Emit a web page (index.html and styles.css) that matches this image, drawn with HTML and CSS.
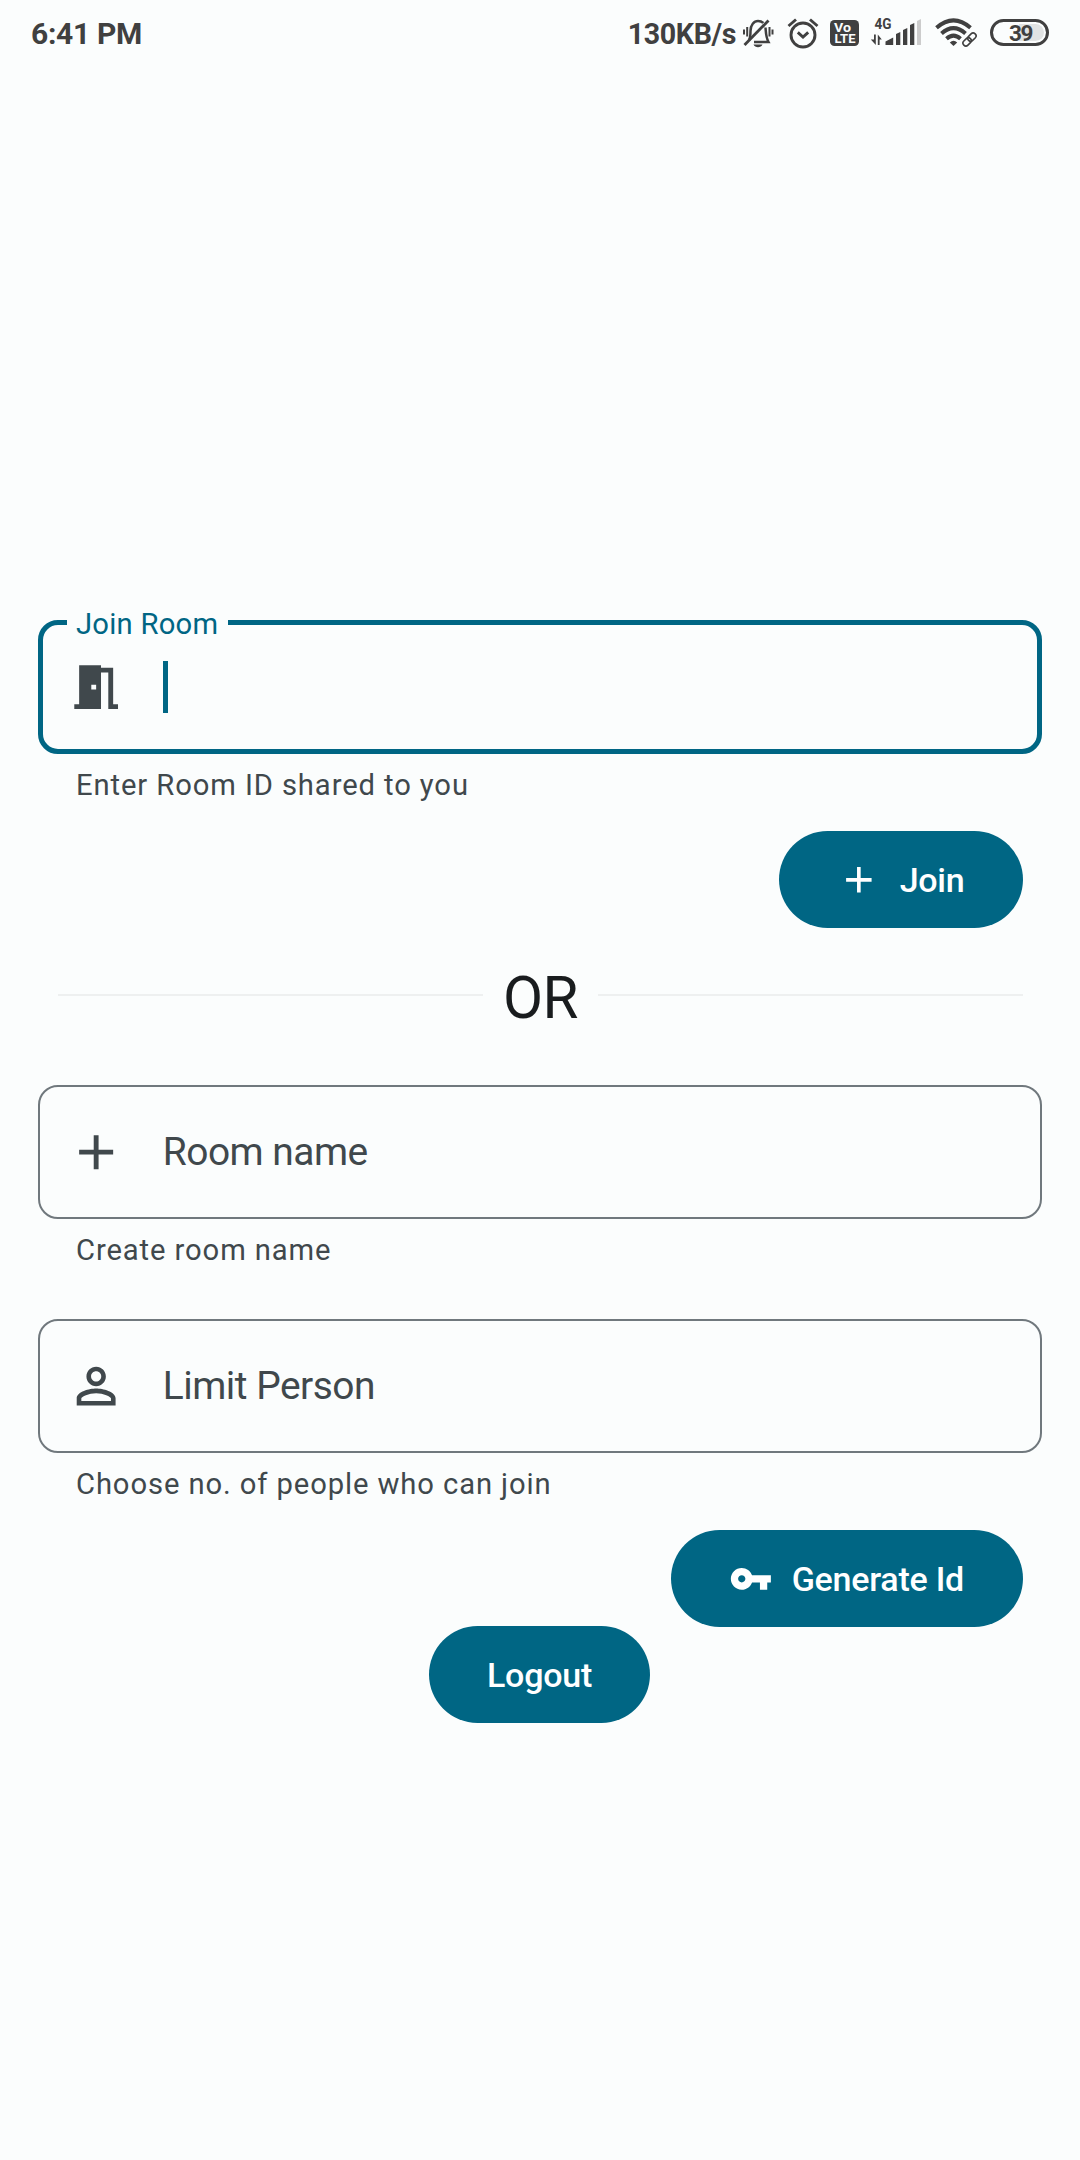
FILE: index.html
```html
<!DOCTYPE html>
<html lang="en">
<head>
<meta charset="utf-8">
<title>Join Room</title>
<link rel="stylesheet" href="styles.css">
</head>
<body>
<header class="status">
  <span class="clock">6:41 PM</span>
  <div class="tray">
    <span class="speed">130KB/s</span>
    <svg class="bell" width="32" height="30" viewBox="0 0 32 30" fill="none" stroke="#404040" stroke-width="2.500">
      <path d="M7 22c1.500-2.500 1.500-5 1.500-9 0-6 3.500-10 7.500-10 2 0 4 .6 5.300 2M23.500 9.500c.5 5.500.3 9.500 3 14.500H12"/>
      <path d="M2.500 27 26.500 2.500" stroke-width="2.800"/>
      <path d="M11.500 26.500h9c-1.500 3.700-7.500 3.700-9 0z" fill="#404040" stroke="none"/>
      <path d="M5.200 9v9.500M2 11.500v5M27.500 9v9.500M30.500 11.500v5" stroke-width="2"/>
    </svg>
    <svg class="alarm" width="32" height="32" viewBox="0 0 32 32" fill="none" stroke="#404040" stroke-width="2.900">
      <circle cx="16" cy="18" r="12"/><path d="m10.800 15.300 5.200 4.700 5.200-4.700M1.500 9 9 2.500M30.500 9 23 2.500"/>
    </svg>
    <svg class="volte" width="30" height="26" viewBox="0 0 30 26">
      <rect width="29" height="26" rx="4.500" fill="#404040"/>
      <text x="4" y="11.500" textLength="17" lengthAdjust="spacingAndGlyphs">Vo</text>
      <text x="4.500" y="23" textLength="21" lengthAdjust="spacingAndGlyphs">LTE</text>
    </svg>
    <svg class="signal" width="52" height="30" viewBox="0 0 52 30" fill="#404040">
      <text x="4.500" y="11.200" textLength="17" lengthAdjust="spacingAndGlyphs">4G</text>
      <path d="M4 16.500h1.800V27L.8 21.500H4zM7.800 27V16.500l4 5H9.600V27z"/>
      <path d="M15.500 27v-3.500l7.700-4V27zM26 27V16l4.300-2v13zM33 27V12l4.300-2v17zM40 27V7l4.300-2v22z"/>
      <path d="M47 27V3l4-2v26z" fill="#ccc"/>
    </svg>
    <svg class="wifi" width="42" height="30" viewBox="0 0 42 30" fill="none" stroke="#404040">
      <path d="M1.500 9.800Q18.500-5 35.500 9.800M6.500 15.500Q18.500 4.800 30.500 15.500M11.500 20.800Q18.500 14.500 25.500 20.800" stroke-width="4"/>
      <path d="m18.500 28-3.700-3.500q3.700-3.500 7.400 0z" fill="#404040" stroke="none"/>
      <g transform="rotate(-45 34.500 21.500)" stroke="#fbfdfd" stroke-width="4"><rect x="26.500" y="18.600" width="9.300" height="5.800" rx="2.900"/><rect x="33.200" y="18.600" width="9.300" height="5.800" rx="2.900"/></g>
      <g transform="rotate(-45 34.500 21.500)" stroke-width="1.600"><rect x="26.500" y="18.600" width="9.300" height="5.800" rx="2.900"/><rect x="33.200" y="18.600" width="9.300" height="5.800" rx="2.900"/></g>
    </svg>
    <div class="battery"><span class="charge">39</span></div>
  </div>
</header>

<main class="rooms">
  <div class="field focused">
    <span class="label">Join Room</span>
    <svg class="lead" viewBox="0 0 24 24"><path d="M14 6v15H3v-2h2V3h9v1h5v15h2v2h-4V6h-3zm-4 5v2h2v-2h-2z"/></svg>
    <span class="caret"></span>
  </div>
  <p class="helper">Enter Room ID shared to you</p>
  <button class="btn end join">
    <svg viewBox="0 0 24 24"><path d="M19 13h-6v6h-2v-6H5v-2h6V5h2v6h6v2z"/></svg>
    <span>Join</span>
  </button>

  <div class="or"><i></i><span>OR</span><i></i></div>

  <div class="field">
    <svg class="lead" viewBox="0 0 24 24"><path d="M19 13h-6v6h-2v-6H5v-2h6V5h2v6h6v2z"/></svg>
    <span class="hint">Room name</span>
  </div>
  <p class="helper">Create room name</p>

  <div class="field limit">
    <svg class="lead" viewBox="0 0 24 24"><path d="M12 5.900c1.160 0 2.100.94 2.100 2.100s-.94 2.100-2.100 2.100S9.900 9.160 9.900 8s.94-2.100 2.100-2.100m0 9c2.970 0 6.100 1.460 6.100 2.100v1.100H5.900V17c0-.64 3.130-2.100 6.100-2.100M12 4C9.790 4 8 5.790 8 8s1.790 4 4 4 4-1.790 4-4-1.790-4-4-4zm0 9c-2.670 0-8 1.340-8 4v3h16v-3c0-2.660-5.330-4-8-4z"/></svg>
    <span class="hint">Limit Person</span>
  </div>
  <p class="helper">Choose no. of people who can join</p>
  <button class="btn end generate">
    <svg viewBox="0 0 24 24"><path d="M12.650 10C11.830 7.670 9.610 6 7 6c-3.310 0-6 2.690-6 6s2.690 6 6 6c2.610 0 4.830-1.670 5.650-4H17v4h4v-4h2v-4H12.650zM7 14c-1.100 0-2-.9-2-2s.9-2 2-2 2 .9 2 2-.9 2-2 2z"/></svg>
    <span>Generate Id</span>
  </button>
  <button class="btn logout"><span>Logout</span></button>
</main>
</body>
</html>
```

FILE: styles.css
```css
* { box-sizing: border-box; }

body {
  margin: 0;
  min-height: 2160px;
  background: #fbfdfd;
  color: #40484c;
  font-family: Roboto, "Liberation Sans", sans-serif;
}

.status {
  display: flex;
  justify-content: space-between;
  height: 66px;
  padding: 0 31px;
  color: #404040;
  font-weight: 700;
}

.clock { font-size: 30px; line-height: 67px; letter-spacing: -0.3px; }

.tray { display: flex; align-items: flex-start; }
.speed { margin-right: 6px; font-size: 28.6px; line-height: 69px; letter-spacing: -0.4px; }
.bell { margin: 18px 13px 0 0; }
.alarm { margin: 17px 11px 0 0; }
.volte { margin: 20px 10px 0 0; }
.volte text { fill: #fbfdfd; font-size: 12.5px; font-weight: 700; }
.signal { margin: 18px 13px 0 0; }
.signal text { font-size: 14.5px; font-weight: 700; }
.wifi { margin: 18px 13px 0 0; }

.battery {
  width: 59px;
  height: 27px;
  margin-top: 19px;
  padding: 2px;
  border: 3px solid #404040;
  border-radius: 14px;
}

.charge {
  display: block;
  height: 17px;
  padding-left: 14px;
  border-radius: 9px;
  background: linear-gradient(90deg, #fbfdfd 50%, #e1e3e3 50%);
  font-size: 22.5px;
  line-height: 19px;
  letter-spacing: -1.5px;
}

.rooms {
  display: flex;
  flex-direction: column;
  padding: 554px 38px 0;
}

.field {
  position: relative;
  display: flex;
  align-items: center;
  height: 134px;
  padding-left: 27px;
  border: 2px solid #70787d;
  border-radius: 20px;
}

.field.focused { padding-left: 24px; border: 5px solid #006684; }
.field.limit { margin-top: 49px; }

.label {
  position: absolute;
  left: 24px;
  top: -21px;
  padding: 0 9px;
  width: 161px;
  background: #fbfdfd;
  color: #006684;
  font-size: 29.200px;
  line-height: 40px;
  letter-spacing: 0.250px;
  white-space: nowrap;
}

.lead { width: 58.300px; height: 58.300px; fill: #40484c; }
.caret { width: 5px; height: 52px; margin-left: 38px; background: #006684; }
.hint { margin-left: 37.500px; font-size: 38.900px; line-height: 52px; letter-spacing: -0.500px; }

.helper {
  margin: 11px 0 0 38px;
  font-size: 29.200px;
  line-height: 40px;
  letter-spacing: 0.900px;
}

.btn {
  display: flex;
  align-items: center;
  height: 97px;
  padding: 0 58px;
  border: 0;
  border-radius: 49px;
  background: #006684;
  color: #fff;
  font: 500 34px/46px Roboto, "Liberation Sans", sans-serif;
  letter-spacing: -0.250px;
  white-space: nowrap;
}

.btn svg { flex: none; width: 43.700px; height: 43.700px; margin-right: 19px; fill: #fff; }
.end { align-self: flex-end; margin: 26px 19px 0 0; }
.join { width: 244px; }
.generate { width: 352px; }
.logout { align-self: center; width: 221px; margin: -1px 1px 0 0; }

.or {
  display: flex;
  align-items: flex-start;
  gap: 20px;
  margin: 31px 19px 48px 20px;
  color: #191c1e;
  font-size: 58.300px;
  line-height: 78px;
  letter-spacing: -0.5px;
}

.or i { flex: 1; height: 2px; margin-top: 35px; background: #eef0f0; }
```
